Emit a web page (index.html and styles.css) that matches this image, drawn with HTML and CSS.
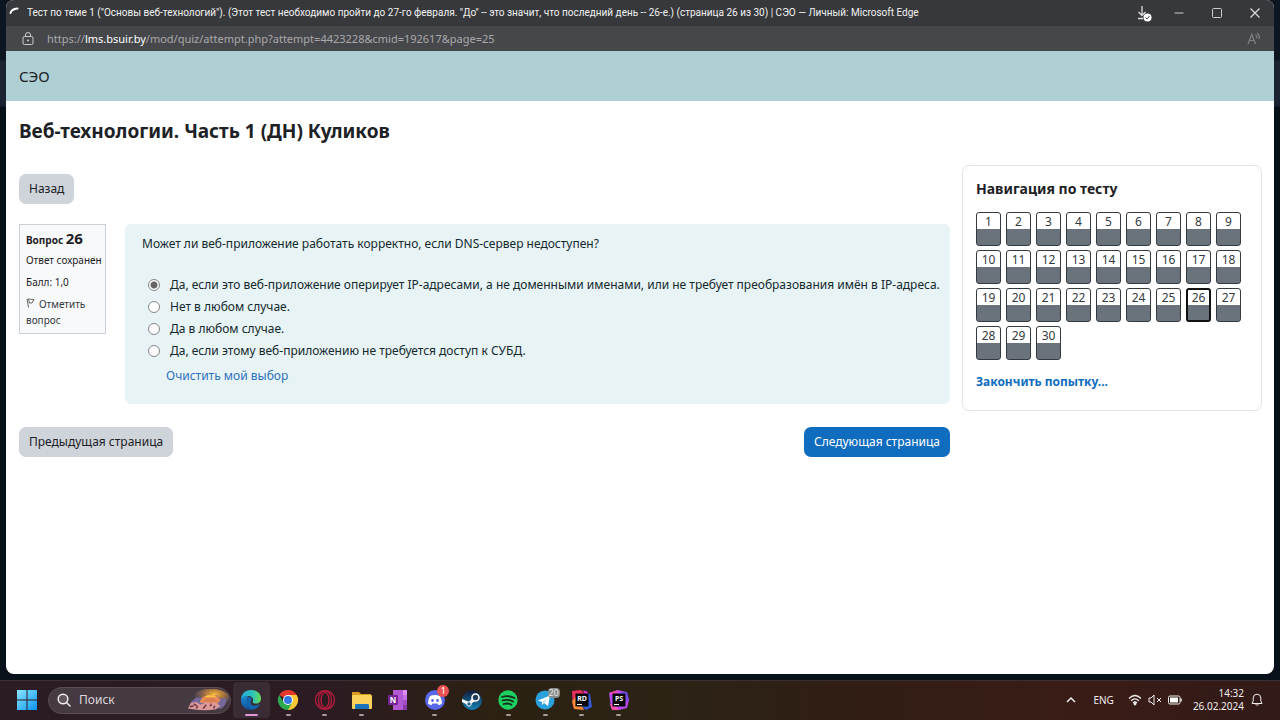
FILE: index.html
```html
<!DOCTYPE html>
<html lang="ru">
<head>
<meta charset="utf-8">
<title>Тест по теме 1</title>
<link rel="stylesheet" href="styles.css">
</head>
<body>
<div class="window">
  <header class="titlebar">
    <svg class="spinner" width="12" height="12" viewBox="0 0 12 12"><path d="M1.500 6Q2.500 2 8.500 1.500" fill="none" stroke="#fff" stroke-width="2" stroke-linecap="round"/></svg>
    <span class="window-title">Тест по теме 1 ("Основы веб-технологий"). (Этот тест необходимо пройти до 27-го февраля. "До" -- это значит, что последний день -- 26-е.) (страница 26 из 30) | СЭО — Личный: Microsoft Edge</span>
    <div class="window-controls">
      <button class="control download" aria-label="Загрузки"><svg width="16" height="18" viewBox="0 0 16 18"><path d="M6 2v9M2.500 8L6 11.500L9.500 8M2 14.500h5" fill="none" stroke="#ddd" stroke-width="1.300"/><circle cx="11.500" cy="13.500" r="4" fill="#fff"/><path d="M9.500 13.500l1.500 1.500l2.500-3" fill="none" stroke="#444"/></svg></button>
      <button class="control" aria-label="Свернуть"><svg width="12" height="12" viewBox="0 0 12 12"><path d="M1.500 6h9" stroke="#ccc"/></svg></button>
      <button class="control" aria-label="Развернуть"><svg width="12" height="12" viewBox="0 0 12 12"><rect x="1.500" y="1.500" width="9" height="9" rx="1" fill="none" stroke="#ccc"/></svg></button>
      <button class="control" aria-label="Закрыть"><svg width="12" height="12" viewBox="0 0 12 12"><path d="M1.500 1.500l9 9m0-9l-9 9" stroke="#ddd" stroke-width="1.200"/></svg></button>
    </div>
  </header>
  <div class="addressbar">
    <svg width="12" height="14" viewBox="0 0 12 14"><rect x="1" y="4.500" width="10" height="8" rx="1.500" fill="none" stroke="#ccc"/><path d="M3.500 4.500V3a2.500 2.500 0 0 1 5 0v1.500" fill="none" stroke="#ccc"/><circle cx="6" cy="8.500" r="1" fill="#ccc"/></svg>
    <span class="url">https://<b>lms.bsuir.by</b>/mod/quiz/attempt.php?attempt=4423228&amp;cmid=192617&amp;page=25</span>
    <button class="read-aloud" aria-label="Прочесть вслух"><svg width="14" height="14" viewBox="0 0 14 14" fill="none" stroke="#828286" stroke-width="1.200"><path d="M1 12L4.800 2.500L8.500 12M2.500 8.500h4.700M8.500 3q1.800 1 1.500 3.500M10 1q3 2 2 6"/></svg></button>
  </div>
  <nav class="site-header"><a href="#">СЭО</a></nav>
  <main class="page">
    <h1>Веб-технологии. Часть 1 (ДН) Куликов</h1>
    <div class="columns">
      <form class="attempt">
        <button type="button" class="button back">Назад</button>
        <section class="question">
          <div class="info">
            <h2>Вопрос <span>26</span></h2>
            <p class="state">Ответ сохранен</p>
            <p class="mark">Балл: 1,0</p>
            <a class="flag" href="#"><svg width="9" height="10" viewBox="0 0 9 10"><path d="M1 1.500q2-1 3.500-.3T8 1.500L6 5q-2 0-3.500-.3M1 1l1.500 8.500M2.500 1.500l1 3" fill="none" stroke="#666"/></svg>Отметить вопрос</a>
          </div>
          <fieldset class="formulation">
            <legend>Может ли веб-приложение работать корректно, если DNS-сервер недоступен?</legend>
            <div class="option"><input type="radio" name="answer" id="a1" checked><label for="a1">Да, если это веб-приложение оперирует IP-адресами, а не доменными именами, или не требует преобразования имён в IP-адреса.</label></div>
            <div class="option"><input type="radio" name="answer" id="a2"><label for="a2">Нет в любом случае.</label></div>
            <div class="option"><input type="radio" name="answer" id="a3"><label for="a3">Да в любом случае.</label></div>
            <div class="option"><input type="radio" name="answer" id="a4"><label for="a4">Да, если этому веб-приложению не требуется доступ к СУБД.</label></div>
            <a class="clear" href="#">Очистить мой выбор</a>
          </fieldset>
        </section>
        <div class="pager">
          <button type="button" class="button">Предыдущая страница</button>
          <button type="button" class="button primary">Следующая страница</button>
        </div>
      </form>
      <aside class="quiz-nav">
        <h2>Навигация по тесту</h2>
        <div class="numbers">
          <a href="#">1</a><a href="#">2</a><a href="#">3</a><a href="#">4</a><a href="#">5</a><a href="#">6</a><a href="#">7</a><a href="#">8</a><a href="#">9</a>
          <a href="#">10</a><a href="#">11</a><a href="#">12</a><a href="#">13</a><a href="#">14</a><a href="#">15</a><a href="#">16</a><a href="#">17</a><a href="#">18</a>
          <a href="#">19</a><a href="#">20</a><a href="#">21</a><a href="#">22</a><a href="#">23</a><a href="#">24</a><a href="#">25</a><a href="#" class="current">26</a><a href="#">27</a>
          <a href="#">28</a><a href="#">29</a><a href="#">30</a>
        </div>
        <a class="finish" href="#">Закончить попытку...</a>
      </aside>
    </div>
  </main>
</div>
<footer class="taskbar">
  <button class="start" aria-label="Пуск"><svg width="20" height="20" viewBox="0 0 20 20"><defs><linearGradient id="win" x2="1" y2="1"><stop stop-color="#8be6fd"/><stop offset="1" stop-color="#0a93f2"/></linearGradient></defs><path fill="url(#win)" d="M0 0h9.500v9.500H0zM10.500 0H20v9.500h-9.500zM0 10.500h9.500V20H0zM10.500 10.500H20V20h-9.500z"/></svg></button>
  <div class="search">
    <svg width="14" height="14" viewBox="0 0 14 14"><circle cx="6" cy="6" r="4.800" fill="#62555c" stroke="#eee" stroke-width="1.500"/><path d="M9.500 9.500l3.500 3.500" stroke="#eee" stroke-width="1.500" stroke-linecap="round"/></svg>
    <input type="text" placeholder="Поиск" aria-label="Поиск">
    <svg width="42" height="22" viewBox="0 0 44 22"><defs><radialGradient id="sun" cx=".6" cy=".3" r=".6"><stop stop-color="#f8b83c"/><stop offset=".5" stop-color="#9c6a40"/><stop offset="1" stop-color="#72667f" stop-opacity="0"/></radialGradient></defs><ellipse cx="25" cy="9" rx="19" ry="10" fill="url(#sun)"/><path d="M4 13l6-5l6 1l5-3h10l4 4l6-1q1 7-5 11H11z" fill="#75699c"/><path d="M13 14l3-6l6-2h9l4 5l-3 4z" fill="#e68b56"/><path d="M18 8h13l-2-2h-8z" fill="#ffc43f"/><path d="M1 20l3-6l6-1l4 3l7-3l4 2l4-2l6 4l-5 4q-15 2-29-1" fill="#dc9a98"/><path d="M3 18l4-1M10 20l1-3M17 20l3-4M24 17l2-1M28 20l1-3M7 15l3 2" stroke="#6b3148" stroke-width="1.600"/><path d="M19 10h10M17 12h15" stroke="#cc7450"/></svg>
  </div>
  <div class="apps">
    <button class="app active" aria-label="Edge"><svg viewBox="0 0 22 22"><defs><linearGradient id="e1"><stop stop-color="#23a9dd"/><stop offset=".6" stop-color="#2fc4b8"/><stop offset="1" stop-color="#6bdd53"/></linearGradient><linearGradient id="e2" x2="0" y2="1"><stop stop-color="#1b8ad6"/><stop offset="1" stop-color="#124e94"/></linearGradient></defs><path d="M1 11C1 5 5 1 11 1s10 4 10 8.500c0 3-2 5-5 5-2.500 0-4-1-3-2.500C14 9 11 6.500 7.500 7 4 7.500 2 9 1 11" fill="url(#e1)"/><path d="M1 11c.5-3 4-4.500 7.500-3.500-3 2-2 8 2 9 3 .8 6.500 0 8-1 1-.5 1.500 0 .5 1C16 20 13 21 11 21 5 21 .5 16.500 1 11" fill="url(#e2)"/><path d="M8.500 8C5 11 7 19 13 20.500c2-.5 5-2 6.500-4.500-6 3-11-.5-8-5 .7-2-1-3.300-3-3" fill="#1166ad"/></svg></button>
    <button class="app running" aria-label="Chrome"><svg viewBox="0 0 22 22"><path d="M11 11L2.300 6A10 10 0 0 1 19.700 6z" fill="#e5392e"/><path d="M11 11V6h8.700A10 10 0 0 1 11 21z" fill="#fcc934"/><path d="M11 11l4.300 2.500L11 21A10 10 0 0 1 2.300 6L6.700 13.500z" fill="#2da94f"/><circle cx="11" cy="11" r="5" fill="#fff"/><circle cx="11" cy="11" r="4" fill="#3478e5"/></svg></button>
    <button class="app running" aria-label="Opera"><svg viewBox="0 0 22 22" fill="none" stroke="#c51d43" stroke-width="1.200"><circle cx="11" cy="11" r="9.500"/><ellipse cx="11" cy="11" rx="6.500" ry="9.200"/><ellipse cx="11" cy="11" rx="4" ry="7.500"/></svg></button>
    <button class="app running" aria-label="Проводник"><svg viewBox="0 0 22 22"><path d="M1 3h7l2 2h10v7H1z" fill="#d99a1d"/><rect x="1" y="6" width="20" height="14" rx="1" fill="#fbd35c"/><path d="M4 20v-4q0-1 1-1h12q1 0 1 1v4z" fill="#1a73b8"/></svg></button>
    <button class="app" aria-label="OneNote"><svg viewBox="0 0 22 22"><path d="M6 1h14v20H6z" fill="#b359d4"/><path d="M16 1h4v5h-4z" fill="#df8af5"/><path d="M16 6h4v5h-4z" fill="#c66fe4"/><path d="M16 11h4v5h-4z" fill="#a24cc5"/><path d="M16 16h4v5h-4z" fill="#8837a8"/><rect x="1" y="6" width="10" height="10" rx="1" fill="#762397"/><text x="6" y="14" class="glyph">N</text></svg></button>
    <button class="app running" aria-label="Discord"><svg viewBox="0 0 22 22"><circle cx="11" cy="11" r="10" fill="#5968e9"/><path d="M6 7q5-2 10 0q2 4 2 7.500q-2 1.500-3.500 1.500l-1-1.500h-5l-1 1.500Q6 16 4 14.500Q4 10 6 7" fill="#fff"/><circle cx="8.500" cy="11.500" r="1.400" fill="#5968e9"/><circle cx="13.500" cy="11.500" r="1.400" fill="#5968e9"/></svg><span class="badge">1</span></button>
    <button class="app" aria-label="Steam"><svg viewBox="0 0 22 22"><defs><linearGradient id="st" x2="0" y2="1"><stop stop-color="#131b35"/><stop offset="1" stop-color="#1684b9"/></linearGradient></defs><circle cx="11" cy="11" r="10" fill="url(#st)"/><path d="M1 10l7 3l4-5l3 3l-5 4l-3 1l-6-3z" fill="#fff"/><circle cx="14.500" cy="8.500" r="3.500" fill="#243b5c" stroke="#fff" stroke-width="1.500"/><circle cx="8" cy="15" r="2.200" fill="#256589" stroke="#fff"/></svg></button>
    <button class="app running" aria-label="Spotify"><svg viewBox="0 0 22 22"><circle cx="11" cy="11" r="9.700" fill="#1ed05f"/><path d="M5 8q6-2 12.500 1M5.500 11.500q6-1.700 10.500 1M6.500 15q5-1.300 8 .7" stroke="#142e1b" stroke-width="1.800" fill="none" stroke-linecap="round"/></svg></button>
    <button class="app running" aria-label="Telegram"><svg viewBox="0 0 22 22"><circle cx="11" cy="11" r="9.500" fill="#2aa0dc"/><path d="M4 11.500L16 6.500L14 17l-4-3l-2 2v-3z" fill="#fff"/><path d="M8 13l6-4l-4 5" fill="#badff2"/></svg><span class="badge gray">20</span></button>
    <button class="app running" aria-label="Rider"><svg viewBox="0 0 22 22"><path d="M1 2l9-1l4 4l-3 10l-9 3z" fill="#e92f5d"/><path d="M14 3l5 2l2 13l-6 3l-5-4z" fill="#315ad9"/><path d="M1 12l5-5l7 14l-10-1z" fill="#f88935"/><path d="M12 1l5 2l-2 5z" fill="#d738c9"/><rect x="4.500" y="4.500" width="13" height="13" fill="#080808"/><text x="11" y="12" class="glyph small">RD</text><path d="M6 15.500h5" stroke="#fff"/></svg></button>
    <button class="app running" aria-label="PhpStorm"><svg viewBox="0 0 22 22"><path d="M1 4l9-3l8 2l3 8l-2 8l-8 2l-8-2z" fill="#b64af0"/><path d="M1 4l9-3l-2 7z" fill="#ed49b7"/><path d="M13 3l6 0l2 8l-4 2z" fill="#794af0"/><path d="M2 15l5 1l4 5l-7 0z" fill="#f451aa"/><rect x="4.500" y="4.500" width="13" height="13" fill="#080808"/><text x="11" y="12" class="glyph small">PS</text><path d="M6 15.500h5" stroke="#fff"/></svg></button>
  </div>
  <div class="tray">
    <svg width="10" height="8" viewBox="0 0 10 8"><path d="M1 6l4-4l4 4" fill="none" stroke="#eee" stroke-width="1.500"/></svg>
    <span class="language">ENG</span>
    <div class="status">
      <svg width="14" height="12" viewBox="0 0 14 12" fill="none" stroke="#eee" stroke-width="1.200"><path d="M1 4.500q6-6 12 0M3 6.800q4-4 8 0M5 9q2-2 4 0"/><circle cx="7" cy="10" r=".8" fill="#eee"/></svg>
      <svg width="14" height="12" viewBox="0 0 14 12" fill="none" stroke="#eee"><path d="M1 4h2l3-3v10L3 8H1zM9 4l4 4m0-4L9 8"/></svg>
      <svg width="14" height="12" viewBox="0 0 14 12"><rect x=".5" y="2" width="11.500" height="8" rx="1.500" fill="none" stroke="#eee"/><path d="M2 3.500h8v5H2z" fill="#fff"/><path d="M13 4.500v3" stroke="#eee" stroke-width="1.500"/></svg>
    </div>
    <time class="clock"><span>14:32</span><span>26.02.2024</span></time>
    <svg width="12" height="14" viewBox="0 0 12 14" fill="none" stroke="#eee"><path d="M1 10.500h10L9.800 8V5a3.800 3.800 0 0 0-7.600 0v3zM4.500 11q1.500 3 3 0"/></svg>
  </div>
</footer>
</body>
</html>
```
FILE: styles.css
```css
* { box-sizing: border-box; }
body {
  margin: 0;
  min-height: 100vh;
  display: flex;
  flex-direction: column;
  background: linear-gradient(#0c1522 0, #0c1522 60px, #1b2332 61px, #1b2332 106px, #08111a 107px);
  font: 12px/18px "Noto Sans", sans-serif;
  color: #1d2125;
}
h1, h2, p { margin: 0; }
a { color: inherit; text-decoration: none; }
button { font: inherit; color: inherit; border: 0; background: none; padding: 0; }
svg { flex: none; display: block; }

.window {
  flex: 1;
  margin: 0 6px 6px;
  border-radius: 8px;
  overflow: hidden;
  background: #fff;
}
.titlebar {
  display: flex;
  align-items: center;
  height: 26px;
  padding-left: 3px;
  background: #37383b;
  color: #f2f2f2;
  font-family: Roboto, "Noto Sans", sans-serif;
  font-size: 10px;
}
.spinner { margin-right: 6px; }
.window-title { flex: 1; white-space: nowrap; overflow: hidden; }
.window-controls { display: flex; }
.control { width: 38px; height: 26px; display: flex; align-items: center; justify-content: center; }
.control.download { width: 32px; }
.addressbar {
  display: flex;
  align-items: center;
  gap: 13px;
  height: 25px;
  padding: 0 13px 0 16px;
  background: #46474a;
  color: #a9a9ac;
  font-size: 11px;
}
.url { flex: 1; }
.url b { font-weight: 400; color: #fff; }

.site-header {
  display: flex;
  align-items: center;
  height: 50px;
  padding: 0 13px;
  background: #aecfd4;
  font-size: 15px;
}
.page { padding: 16px 12px 40px 13px; }
h1 { font-size: 19px; line-height: 28px; }
.columns { display: flex; align-items: flex-start; gap: 12px; margin-top: 20px; }
.attempt { flex: 1; min-width: 0; padding-top: 9px; }
.button {
  height: 30px;
  padding: 0 10px;
  border-radius: 7px;
  background: #ced4da;
}
.button.primary { background: #0f6cbf; color: #fff; }
.question { display: flex; align-items: flex-start; gap: 19px; margin-top: 20px; }
.info {
  width: 87px;
  padding: 4px 6px 5px;
  border: 1px solid #cad0d7;
  background: #f8f9fa;
  font-size: 10px;
  line-height: 16px;
}
.info h2 { font-size: 10px; line-height: 19px; }
.info h2 span { font-size: 15px; }
.info p { margin-bottom: 6px; white-space: nowrap; }
.info .state { margin-top: 2px; }
.flag { color: #343a40; }
.flag svg { display: inline-block; margin-right: 4px; }
.formulation {
  flex: 1;
  min-width: 0;
  margin: 0;
  padding: 11px 17px 19px;
  border: 0;
  border-radius: 6px;
  background: #e7f3f5;
  color: #14292d;
}
.formulation legend { float: left; width: 100%; padding: 0; margin-bottom: 21px; }
.option { clear: both; display: flex; align-items: center; height: 22px; padding-left: 6px; gap: 10px; }
.option input {
  flex: none;
  appearance: none;
  width: 12px;
  height: 12px;
  margin: 0;
  border: 1px solid #858585;
  border-radius: 50%;
  background: #fff;
}
.option input:checked { background: radial-gradient(circle, #666 3px, #fff 4px); }
.option label { white-space: nowrap; }
.clear { display: block; width: max-content; margin: 5px 0 0 24px; color: #2d72bd; }
.pager { display: flex; justify-content: space-between; margin-top: 23px; }

.quiz-nav {
  width: 300px;
  padding: 12px 13px 19px;
  border: 1px solid #e2e3e5;
  border-radius: 7px;
}
.quiz-nav h2 { font-size: 14px; line-height: 22px; }
.numbers {
  display: grid;
  grid-template-columns: repeat(9, 25px);
  gap: 4px 5px;
  margin: 12px 0 13px;
}
.numbers a {
  height: 34px;
  border: 1px solid #343a40;
  border-radius: 3px;
  background: linear-gradient(#fff 16px, #6a737b 16px);
  color: #343a40;
  text-align: center;
}
.numbers .current { border: 2px solid #111; line-height: 16px; background: linear-gradient(#fff 15px, #6a737b 15px); }
.finish { color: #0f6cbf; font-weight: 700; }

.taskbar {
  display: flex;
  align-items: center;
  height: 40px;
  padding: 0 17px 1px;
  border-top: 1px solid #393035;
  background: linear-gradient(90deg, #2a1b25, #2c1b22 25%, #2c2113 38%, #2b2415 52%, #301e15 65%, #3a1c16 85%, #311a17);
  color: #f1eeee;
  font-size: 10px;
}
.search {
  display: flex;
  align-items: center;
  width: 183px;
  height: 27px;
  margin-left: 11px;
  padding: 0 1px 0 8px;
  gap: 8px;
  border: 1px solid #594c53;
  border-radius: 14px;
  background: #463a42;
}
.search input { flex: 1; min-width: 0; padding: 0; border: 0; background: none; font: inherit; font-size: 12px; color: #fff; }
.search input::placeholder { color: #ddd6da; }
.apps { display: grid; grid-template-columns: repeat(11, 1fr); width: 404px; margin-left: 2px; }
.app { position: relative; height: 36px; display: flex; justify-content: center; padding-top: 7px; border-radius: 4px; }
.app svg { width: 22px; height: 22px; }
.app.active { background: #3a2c35; }
.app.running::after, .app.active::after {
  content: "";
  position: absolute;
  bottom: 2px;
  width: 5px;
  height: 2px;
  border-radius: 1px;
  background: #a5999a;
}
.app.active::after { width: 13px; background: #dc9ad8; }
.badge {
  position: absolute;
  top: 3px;
  right: 4px;
  min-width: 12px;
  border-radius: 6px;
  background: #ea5353;
  color: #fff;
  font-size: 9px;
  line-height: 12px;
}
.badge.gray { top: 6px; border-radius: 4px; line-height: 10px; background: #8a8c8b; color: #e5e5e5; }
.glyph { font: 700 8px "Noto Sans", sans-serif; fill: #fff; text-anchor: middle; }
.small { font-size: 7px; }
.tray { display: flex; align-items: center; margin-left: auto; }
.language { margin-left: 17px; }
.status { display: flex; gap: 6px; margin: 0 11px 0 14px; }
.clock { display: flex; flex-direction: column; align-items: flex-end; line-height: 13px; margin-right: 7px; }
```
